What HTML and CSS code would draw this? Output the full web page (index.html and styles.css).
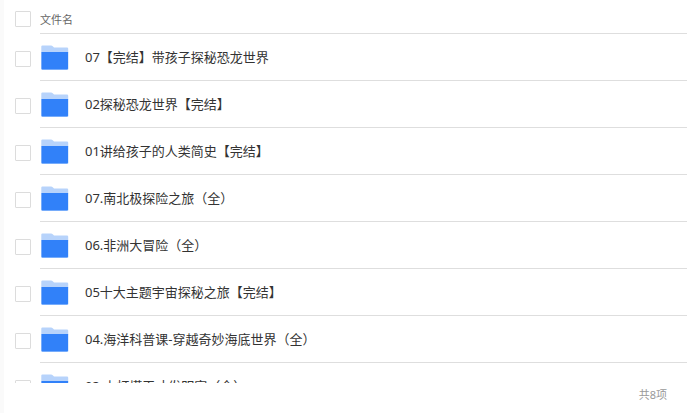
FILE: index.html
```html
<!DOCTYPE html>
<html lang="zh-CN">
<head>
<meta charset="utf-8">
<title>文件列表</title>
<link rel="stylesheet" href="styles.css">
</head>
<body>
<svg class="sprite" aria-hidden="true">
  <symbol id="folder" viewBox="0 0 28 26">
    <path fill="#b7d3fb" d="M0.3 9V2.5Q0.3 1.4 1.4 1.4H10Q11 1.4 12 2.4L13 3.4H26Q27.2 3.4 27.2 4.6V9Z"/>
    <path fill="#bcd7fc" d="M0 8H27.5V24.5Q27.5 26 26 26H1.5Q0 26 0 24.5Z"/>
    <path fill="#3181f9" d="M0.5 8H27V24.4Q27 25.4 26 25.4H1.5Q0.5 25.4 0.5 24.4Z"/>
  </symbol>
</svg>
<main class="panel">
  <div class="list">
    <table class="files">
      <thead>
        <tr>
          <th class="pick"><input class="check" type="checkbox" id="all"></th>
          <th class="name"><label for="all">文件名</label></th>
        </tr>
      </thead>
      <tbody>
        <tr>
          <td class="pick"><input class="check" type="checkbox" id="f1"></td>
          <td class="name"><label class="file" for="f1"><svg class="folder"><use href="#folder"/></svg><span>07【完结】带孩子探秘恐龙世界</span></label></td>
        </tr>
        <tr>
          <td class="pick"><input class="check" type="checkbox" id="f2"></td>
          <td class="name"><label class="file" for="f2"><svg class="folder"><use href="#folder"/></svg><span>02探秘恐龙世界【完结】</span></label></td>
        </tr>
        <tr>
          <td class="pick"><input class="check" type="checkbox" id="f3"></td>
          <td class="name"><label class="file" for="f3"><svg class="folder"><use href="#folder"/></svg><span>01讲给孩子的人类简史【完结】</span></label></td>
        </tr>
        <tr>
          <td class="pick"><input class="check" type="checkbox" id="f4"></td>
          <td class="name"><label class="file" for="f4"><svg class="folder"><use href="#folder"/></svg><span>07.南北极探险之旅（全）</span></label></td>
        </tr>
        <tr>
          <td class="pick"><input class="check" type="checkbox" id="f5"></td>
          <td class="name"><label class="file" for="f5"><svg class="folder"><use href="#folder"/></svg><span>06.非洲大冒险（全）</span></label></td>
        </tr>
        <tr>
          <td class="pick"><input class="check" type="checkbox" id="f6"></td>
          <td class="name"><label class="file" for="f6"><svg class="folder"><use href="#folder"/></svg><span>05十大主题宇宙探秘之旅【完结】</span></label></td>
        </tr>
        <tr>
          <td class="pick"><input class="check" type="checkbox" id="f7"></td>
          <td class="name"><label class="file" for="f7"><svg class="folder"><use href="#folder"/></svg><span>04.海洋科普课-穿越奇妙海底世界（全）</span></label></td>
        </tr>
        <tr>
          <td class="pick"><input class="check" type="checkbox" id="f8"></td>
          <td class="name"><label class="file" for="f8"><svg class="folder"><use href="#folder"/></svg><span>03.小灯塔天才发明家（全）</span></label></td>
        </tr>
      </tbody>
    </table>
  </div>
  <footer class="total">共8项</footer>
</main>
</body>
</html>
```
FILE: styles.css
```css
* {
  box-sizing: border-box;
}

body {
  margin: 0;
  background: #fff;
  color: #333;
  font: 13px/20px "Noto Sans", "Noto Sans CJK SC", sans-serif;
}

.sprite {
  display: none;
}

.panel {
  display: flex;
  flex-direction: column;
  height: 100vh;
  border-left: 4px solid #fafafa;
}

.list {
  flex: 1;
  min-height: 0;
  overflow: hidden;
}

.files {
  width: 100%;
  table-layout: fixed;
  border-spacing: 0;
}

.files th,
.files td {
  padding: 0;
  text-align: left;
  vertical-align: middle;
}

.files th {
  height: 34px;
  color: #666;
  font-size: 11px;
  font-weight: 400;
}

.files td {
  height: 47px;
}

.files .pick {
  width: 36px;
  padding: 2px 0 0 11px;
}

.files th.pick {
  padding-top: 4px;
}

.files .name {
  border-bottom: 1px solid #dedede;
}

.files th.name {
  padding-top: 6px;
}

.check {
  display: block;
  appearance: none;
  width: 16px;
  height: 16px;
  margin: 0;
  border: 1px solid #dcdcdc;
  border-radius: 1px;
  background: #fff;
}

.check:checked {
  border-color: #3181f9;
  background: #3181f9;
}

.file {
  display: flex;
  align-items: center;
  gap: 16px;
}

.folder {
  width: 28px;
  height: 26px;
  margin-left: 1px;
}

.total {
  height: 30px;
  padding: 2px 20px 0;
  color: #999;
  font-size: 11px;
  text-align: right;
}
```
